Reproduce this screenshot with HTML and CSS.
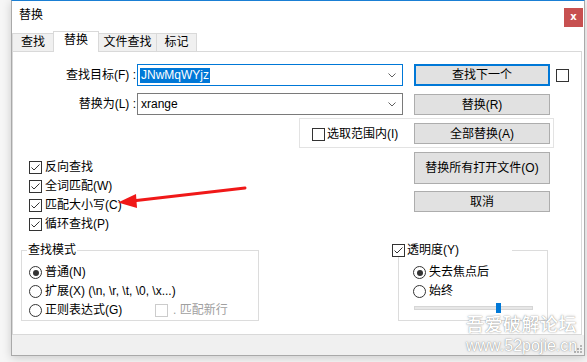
FILE: index.html
```html
<!DOCTYPE html>
<html lang="zh-CN">
<head>
<meta charset="utf-8">
<title>替换</title>
<link rel="stylesheet" href="styles.css">
</head>
<body>
<div class="window">
  <div class="titlebar">
    <span class="title">替换</span>
    <span class="close">x</span>
  </div>
  <div class="tabs">
    <span class="tab t1">查找</span>
    <span class="tab t2 active">替换</span>
    <span class="tab t3">文件查找</span>
    <span class="tab t4">标记</span>
  </div>
  <div class="page">
    <div class="row r1">
      <span class="lbl">查找目标(F) :</span>
      <div class="combo focus"><span class="sel">JNwMqWYjz</span><svg class="chev" width="8" height="5" viewBox="0 0 8 5"><polyline points="0.5,0.5 4,4 7.5,0.5" fill="none" stroke="#606060" stroke-width="1"/></svg></div>
      <button class="btn wide default">查找下一个</button>
      <span class="cb topcb"></span>
    </div>
    <div class="row r2">
      <span class="lbl">替换为(L) :</span>
      <div class="combo"><span class="val">xrange</span><svg class="chev" width="8" height="5" viewBox="0 0 8 5"><polyline points="0.5,0.5 4,4 7.5,0.5" fill="none" stroke="#606060" stroke-width="1"/></svg></div>
      <button class="btn wide short">替换(R)</button>
    </div>
    <div class="frame">
      <span class="cb"></span><span class="cbtext">选取范围内(I)</span>
      <button class="btn wide short push">全部替换(A)</button>
    </div>
    <div class="middle">
      <div class="checks">
        <div class="check"><span class="cb on"><svg width="11" height="11" viewBox="0 0 11 11"><polyline points="1.5,5.5 4,8 9.5,2.5" fill="none" stroke="#333" stroke-width="1"/></svg></span><span>反向查找</span></div>
        <div class="check"><span class="cb on"><svg width="11" height="11" viewBox="0 0 11 11"><polyline points="1.5,5.5 4,8 9.5,2.5" fill="none" stroke="#333" stroke-width="1"/></svg></span><span>全词匹配(W)</span></div>
        <div class="check"><span class="cb on"><svg width="11" height="11" viewBox="0 0 11 11"><polyline points="1.5,5.5 4,8 9.5,2.5" fill="none" stroke="#333" stroke-width="1"/></svg></span><span>匹配大小写(C)</span></div>
        <div class="check"><span class="cb on"><svg width="11" height="11" viewBox="0 0 11 11"><polyline points="1.5,5.5 4,8 9.5,2.5" fill="none" stroke="#333" stroke-width="1"/></svg></span><span>循环查找(P)</span></div>
      </div>
      <div class="btncol">
        <button class="btn wide tall">替换所有打开文件(O)</button>
        <button class="btn wide short">取消</button>
      </div>
    </div>
    <div class="bottom">
      <fieldset class="group mode">
        <legend>查找模式</legend>
        <div class="radios">
          <div class="check"><span class="rb on"></span><span>普通(N)</span></div>
          <div class="check"><span class="rb"></span><span>扩展(X) (\n, \r, \t, \0, \x...)</span></div>
          <div class="check">
            <span class="rcell"><span class="rb"></span><span>正则表达式(G)</span></span>
            <span class="cb dis"></span><span class="distext">. 匹配新行</span>
          </div>
        </div>
      </fieldset>
      <fieldset class="group trans">
        <legend><span class="cb on"><svg width="11" height="11" viewBox="0 0 11 11"><polyline points="1.5,5.5 4,8 9.5,2.5" fill="none" stroke="#333" stroke-width="1"/></svg></span><span class="cbtext">透明度(Y)</span></legend>
        <div class="tradios">
          <div class="check"><span class="rb on"></span><span>失去焦点后</span></div>
          <div class="check"><span class="rb"></span><span>始终</span></div>
          <div class="track"><span class="thumb"></span></div>
        </div>
      </fieldset>
    </div>
  </div>
  <div class="status">
    <svg class="grip" width="8" height="8" viewBox="0 0 8 8" fill="#b5b5b5"><rect x="6" y="0" width="2" height="2"/><rect x="3" y="3" width="2" height="2"/><rect x="6" y="3" width="2" height="2"/><rect x="0" y="6" width="2" height="2"/><rect x="3" y="6" width="2" height="2"/><rect x="6" y="6" width="2" height="2"/></svg>
  </div>
</div>
<svg class="arrow" width="587" height="362" viewBox="0 0 587 362">
  <line x1="245" y1="188" x2="132" y2="201" stroke="#f01818" stroke-width="3" stroke-linecap="round"/>
  <polygon points="118,202.5 136,194 137,208" fill="#f01818"/>
</svg>
<div class="watermark">
  <div class="wm1">吾爱破解论坛</div>
  <div class="wm2">www.52pojie.cn</div>
</div>
</body>
</html>
```

FILE: styles.css
```css
* { box-sizing: border-box; }
html, body { margin: 0; padding: 0; }
body {
  width: 587px;
  height: 362px;
  overflow: hidden;
  position: relative;
  background: #f6f6f6;
  font: 12px/16px "Liberation Sans", "Noto Sans CJK SC", sans-serif;
  color: #000;
}
.window {
  margin-left: 11px;
  width: 574px;
  height: 356px;
  border: 1px solid #a9a9a9;
  border-top-color: #1a7fd4;
  background: #fff;
  box-shadow: 0 2px 9px rgba(0, 0, 0, 0.18);
  display: flex;
  flex-direction: column;
}
.titlebar {
  height: 30px;
  flex: none;
  display: flex;
  justify-content: space-between;
  align-items: flex-start;
  padding-left: 7px;
}
.title { line-height: 28px; }
.close {
  margin-top: 7px;
  margin-right: 1px;
  width: 19px;
  height: 19px;
  background: #c75050;
  color: #fff;
  font: bold 10px/18px "DejaVu Sans", sans-serif;
  text-align: center;
}
.tabs {
  height: 20px;
  flex: none;
  display: flex;
  align-items: flex-end;
}
.tab {
  height: 18px;
  border: 1px solid #d9d9d9;
  border-bottom: none;
  background: #f0f0f0;
  text-align: center;
  line-height: 17px;
  margin-left: -1px;
}
.t1 { width: 42px; margin-left: 0; }
.t2 { width: 46px; }
.t3 { width: 59px; }
.t4 { width: 41px; }
.tab.active {
  height: 21px;
  margin-bottom: -1px;
  background: #fff;
  position: relative;
  z-index: 1;
}
.page {
  height: 284px;
  flex: none;
  margin-right: 2px;
  border: 1px solid #d9d9d9;
  background: #fff;
}
.row {
  display: flex;
  align-items: center;
  height: 22px;
}
.r1 { margin-top: 12px; }
.r2 { margin-top: 7px; }
.lbl {
  width: 124px;
  text-align: right;
  padding-right: 1px;
  line-height: 16px;
}
.combo {
  width: 266px;
  height: 22px;
  border: 1px solid #7a7a7a;
  display: flex;
  align-items: center;
  justify-content: space-between;
  padding: 0 6px 0 2px;
}
.combo.focus { border-color: #0078d7; }
.sel {
  background: #0078d7;
  color: #fff;
  line-height: 15px;
  height: 15px;
  padding: 0 1px;
}
.val { padding-left: 1px; }
.chev { display: block; }
.btn {
  font: inherit;
  color: #000;
  background: #e1e1e1;
  border: 1px solid #adadad;
  padding: 0;
  margin: 0;
}
.wide { width: 136px; }
.row .btn { margin-left: 11px; height: 22px; }
.btn.default { border: 2px solid #0078d7; }
.row .btn.short { height: 21px; align-self: flex-end; }
.cb {
  flex: none;
  display: inline-flex;
  align-items: center;
  justify-content: center;
  width: 13px;
  height: 13px;
  border: 1px solid #333;
  background: #fff;
}
.cb svg { display: block; }
.topcb { margin-left: 6px; }
.frame {
  margin: 3px 0 0 286px;
  width: 255px;
  height: 30px;
  border: 1px solid #e3e3e3;
  display: flex;
  align-items: flex-start;
  padding-left: 12px;
}
.frame .cb { margin-top: 9px; }
.cbtext { margin-left: 2px; line-height: 16px; }
.frame .cbtext { margin-top: 7px; }
.frame .btn.push {
  margin: 4px 3px 0 auto;
  height: 21px;
}
.middle {
  display: flex;
  height: 95px;
}
.checks {
  width: 401px;
  padding: 13px 0 0 16px;
  display: flex;
  flex-direction: column;
  gap: 6px;
}
.check {
  display: flex;
  align-items: center;
  height: 13px;
  line-height: 13px;
  white-space: nowrap;
}
.check > span + span { margin-left: 3px; }
.btncol {
  display: flex;
  flex-direction: column;
  gap: 7px;
  padding-top: 4px;
}
.btncol .tall { height: 32px; }
.btncol .short { height: 21px; }
.bottom {
  display: flex;
  align-items: flex-start;
}
.group {
  margin: 0;
  border: 1px solid #dcdcdc;
  min-inline-size: 0;
}
.group legend {
  line-height: 14px;
  height: 14px;
}
.mode {
  margin-left: 8px;
  width: 238px;
  height: 78px;
  padding: 0 4px 0 5px;
}
.mode legend { padding: 0 1px; }
.radios {
  margin: 9px 0 0 2px;
  display: flex;
  flex-direction: column;
  gap: 6px;
}
.rb {
  flex: none;
  width: 13px;
  height: 13px;
  border: 1px solid #333;
  border-radius: 50%;
  display: inline-flex;
  align-items: center;
  justify-content: center;
  background: #fff;
}
.rb.on::after {
  content: "";
  width: 6px;
  height: 6px;
  border-radius: 50%;
  background: #333;
}
.rcell {
  display: flex;
  align-items: center;
  width: 123px;
}
.rcell .rb + span { margin-left: 3px; }
.cb.dis { border-color: #cccccc; }
.check .distext { margin-left: 5px; color: #a0a0a0; }
.trans {
  margin-left: 139px;
  width: 150px;
  height: 78px;
  padding: 0;
}
.trans legend {
  margin-left: -7px;
  width: 120px;
  padding: 0;
  background: #fff;
  display: flex;
  align-items: center;
}
.tradios {
  margin: 9px 0 0 14px;
  display: flex;
  flex-direction: column;
  gap: 6px;
}
.track {
  margin: 2px 0 0 1px;
  width: 119px;
  height: 4px;
  background: #e7e7e7;
  border: 1px solid #d6d6d6;
  display: flex;
  align-items: center;
}
.thumb {
  flex: none;
  margin-left: 81px;
  width: 5px;
  height: 10px;
  background: #0078d7;
}
.status {
  height: 20px;
  flex: none;
  background: #f0f0f0;
  display: flex;
  justify-content: flex-end;
  align-items: flex-end;
  padding: 0 2px 2px 0;
}
.grip { display: block; }
.arrow {
  position: absolute;
  left: 0;
  top: 0;
  pointer-events: none;
}
.watermark {
  position: absolute;
  left: 466px;
  top: 313px;
  color: #fff;
  text-shadow: 0 0 1px rgba(0, 0, 0, 0.45), 0 0 3px rgba(0, 0, 0, 0.22);
  pointer-events: none;
}
.wm1 {
  font: 500 18px/21px "Noto Sans CJK SC", sans-serif;
  letter-spacing: 0.5px;
}
.wm2 {
  font: 16px/19px "Liberation Sans", sans-serif;
  margin-top: 2px;
}
```
